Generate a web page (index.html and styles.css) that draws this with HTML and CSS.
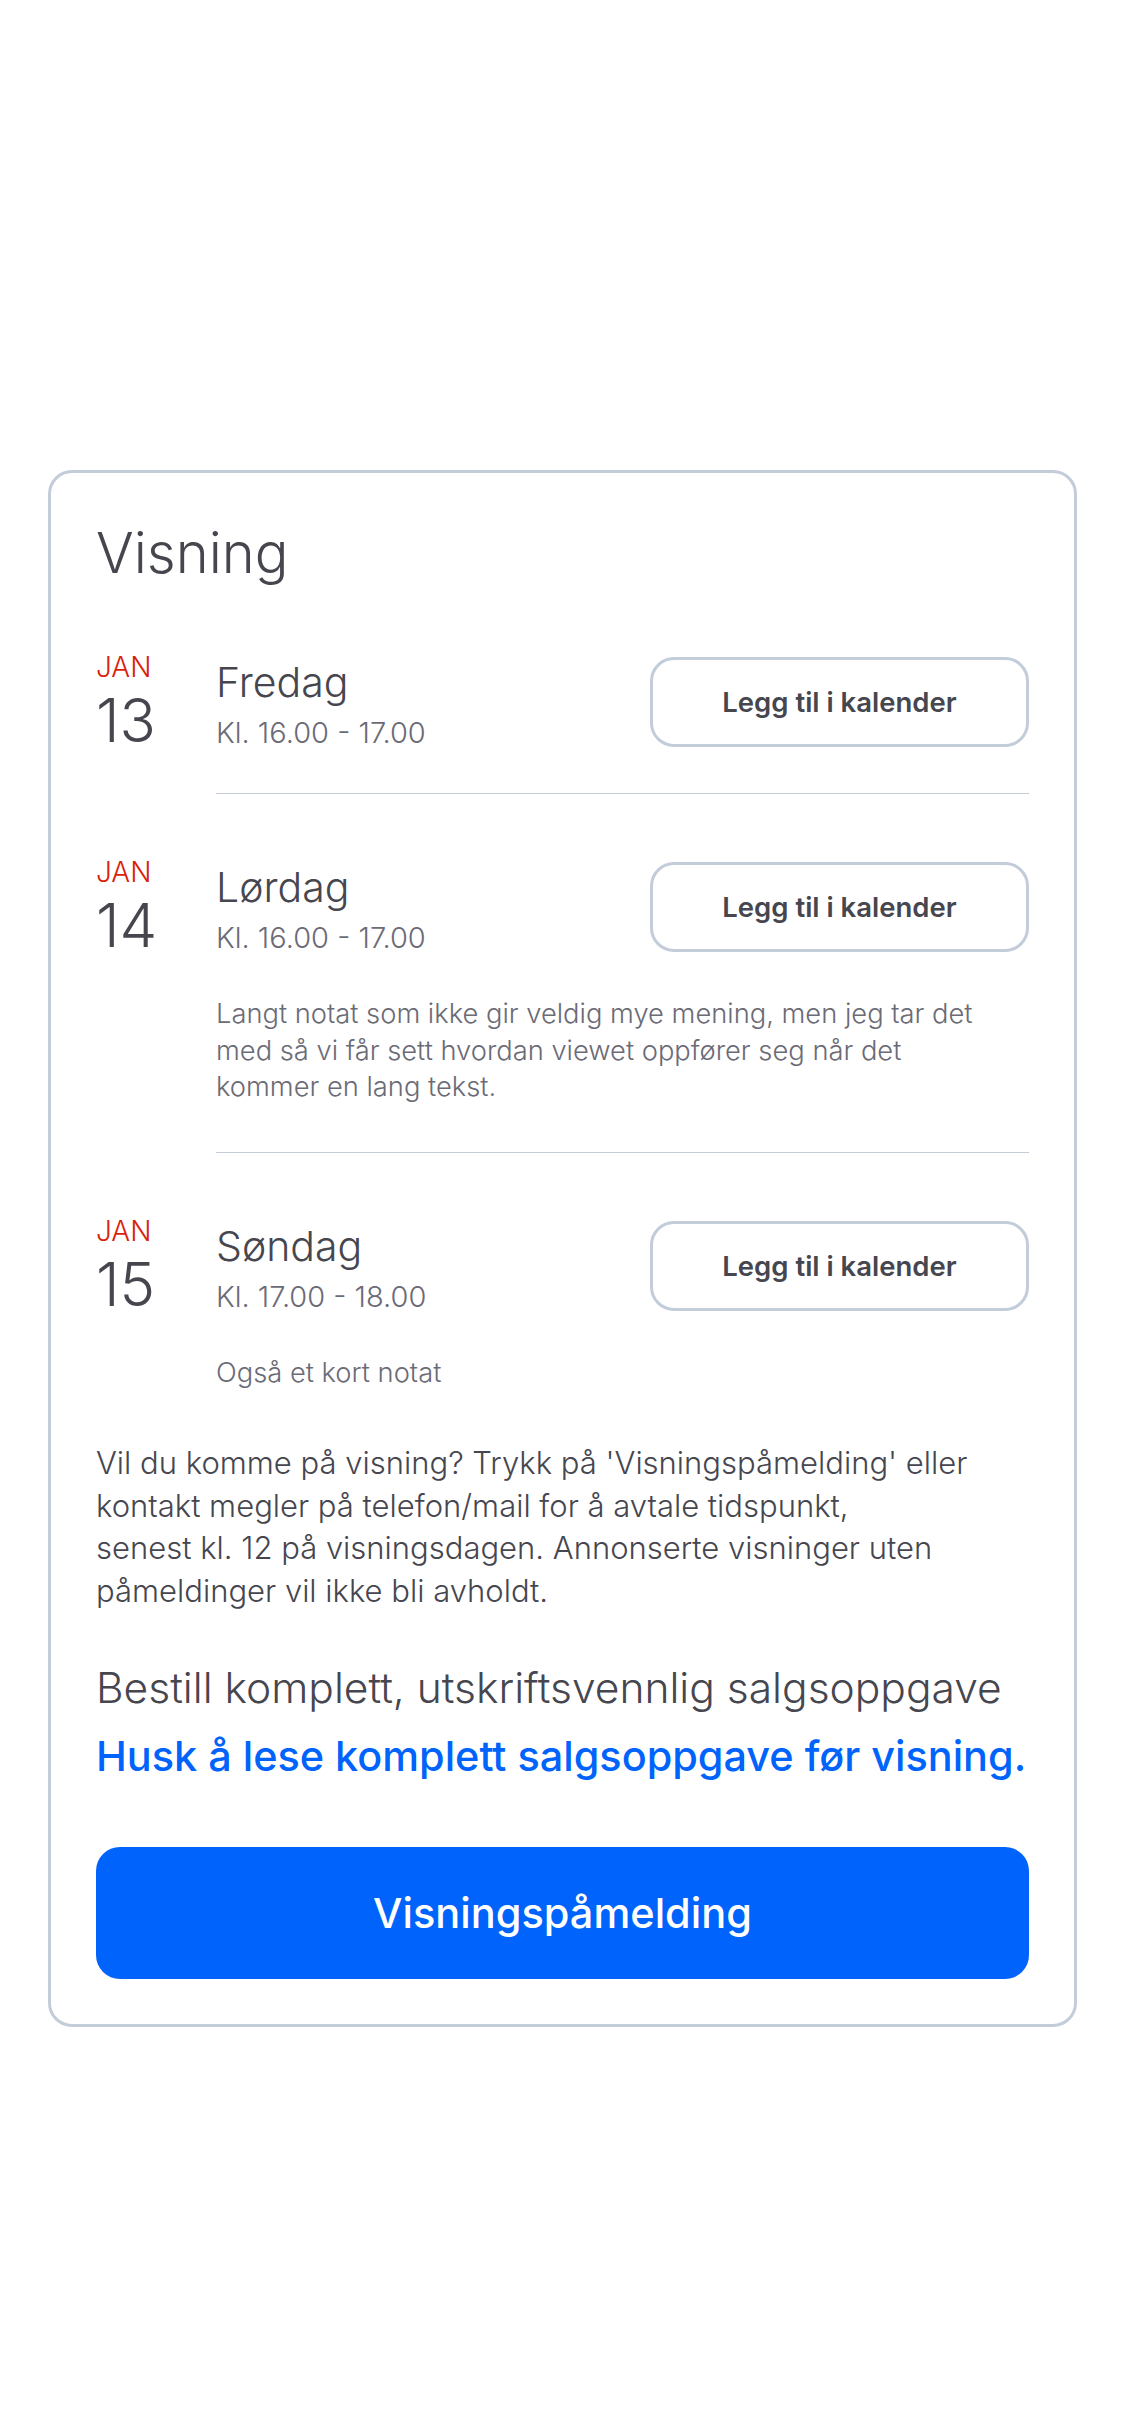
FILE: index.html
```html
<!DOCTYPE html>
<html lang="no">
<head>
<meta charset="utf-8">
<title>Visning</title>
<link rel="stylesheet" href="styles.css">
</head>
<body>
<section class="card">
  <h2 class="title">Visning</h2>

  <div class="item">
    <div class="date">
      <div class="month">JAN</div>
      <div class="day">13</div>
    </div>
    <div class="body has-divider">
      <div class="top">
        <div class="info">
          <div class="weekday">Fredag</div>
          <div class="time">Kl. 16.00 - 17.00</div>
        </div>
        <button class="cal-btn">Legg til i kalender</button>
      </div>
    </div>
  </div>

  <div class="item">
    <div class="date">
      <div class="month">JAN</div>
      <div class="day">14</div>
    </div>
    <div class="body has-divider">
      <div class="top">
        <div class="info">
          <div class="weekday">Lørdag</div>
          <div class="time">Kl. 16.00 - 17.00</div>
        </div>
        <button class="cal-btn">Legg til i kalender</button>
      </div>
      <p class="note">Langt notat som ikke gir veldig mye mening, men jeg tar det med så vi får sett hvordan viewet oppfører seg når det<br>kommer en lang tekst.</p>
    </div>
  </div>

  <div class="item">
    <div class="date">
      <div class="month">JAN</div>
      <div class="day">15</div>
    </div>
    <div class="body">
      <div class="top">
        <div class="info">
          <div class="weekday">Søndag</div>
          <div class="time">Kl. 17.00 - 18.00</div>
        </div>
        <button class="cal-btn">Legg til i kalender</button>
      </div>
      <p class="note">Også et kort notat</p>
    </div>
  </div>

  <p class="info-text">Vil du komme på visning? Trykk på 'Visningspåmelding' eller kontakt megler på telefon/mail for å avtale tidspunkt,<br>senest kl. 12 på visningsdagen. Annonserte visninger uten påmeldinger vil ikke bli avholdt.</p>

  <p class="order">Bestill komplett, utskriftsvennlig salgsoppgave</p>
  <a class="link" href="#">Husk å lese komplett salgsoppgave før visning.</a>

  <button class="primary">Visningspåmelding</button>
</section>
</body>
</html>
```

FILE: styles.css
```css
* { box-sizing: border-box; }

html, body {
  margin: 0;
  padding: 0;
  background: #ffffff;
}

body {
  font-family: Inter, "Noto Sans", sans-serif;
  font-weight: 300;
  color: #46464f;
  padding-top: 470px;
}

.card {
  margin: 0 48px;
  border: 3px solid #c3ccd9;
  border-radius: 24px;
  padding: 52px 45px 45px;
  display: flex;
  flex-direction: column;
}

.title {
  margin: 0 0 72px;
  font-size: 56px;
  line-height: 56px;
  font-weight: 300;
  color: #46464f;
}

.item {
  display: flex;
}

.item + .item {
  margin-top: 64px;
}

.date {
  width: 120px;
  flex: none;
}

.month {
  font-size: 28px;
  line-height: 28px;
  color: #d91f0a;
  font-weight: 300;
}

.day {
  margin-top: 9px;
  font-size: 60px;
  line-height: 60px;
  font-weight: 300;
  color: #46464f;
}

.body {
  flex: 1;
  min-width: 0;
}

.body.has-divider {
  padding-bottom: 46px;
  border-bottom: 1px solid #c3ccd9;
}

.top {
  display: flex;
  justify-content: space-between;
  align-items: flex-start;
}

.weekday {
  margin-top: 9px;
  font-size: 41px;
  line-height: 41px;
  color: #46464f;
}

.time {
  margin-top: 15px;
  font-size: 29px;
  line-height: 29px;
  color: #6b6b76;
}

.cal-btn {
  margin-top: 4px;
  width: 379px;
  height: 90px;
  border: 3px solid #c3ccd9;
  border-radius: 24px;
  background: #ffffff;
  font-family: Inter, "Noto Sans", sans-serif;
  font-weight: 600;
  font-size: 27.5px;
  color: #46464f;
  padding: 0;
}

.note {
  margin: 44px 0 0;
  font-size: 27.3px;
  line-height: 36.5px;
  color: #6b6b76;
  font-weight: 300;
}

.info-text {
  margin: 51px 0 0;
  font-size: 31px;
  line-height: 42.67px;
  color: #46464f;
}

.order {
  margin: 40px 0 0;
  font-size: 42.5px;
  line-height: 69px;
  color: #46464f;
}

.link {
  display: block;
  font-size: 41.4px;
  line-height: 69px;
  font-weight: 500;
  color: #0063fb;
  text-decoration: none;
}

.primary {
  margin-top: 56px;
  height: 132px;
  border: none;
  border-radius: 24px;
  background: #0063fb;
  color: #ffffff;
  font-family: Inter, "Noto Sans", sans-serif;
  font-size: 41.5px;
  font-weight: 500;
}
```
